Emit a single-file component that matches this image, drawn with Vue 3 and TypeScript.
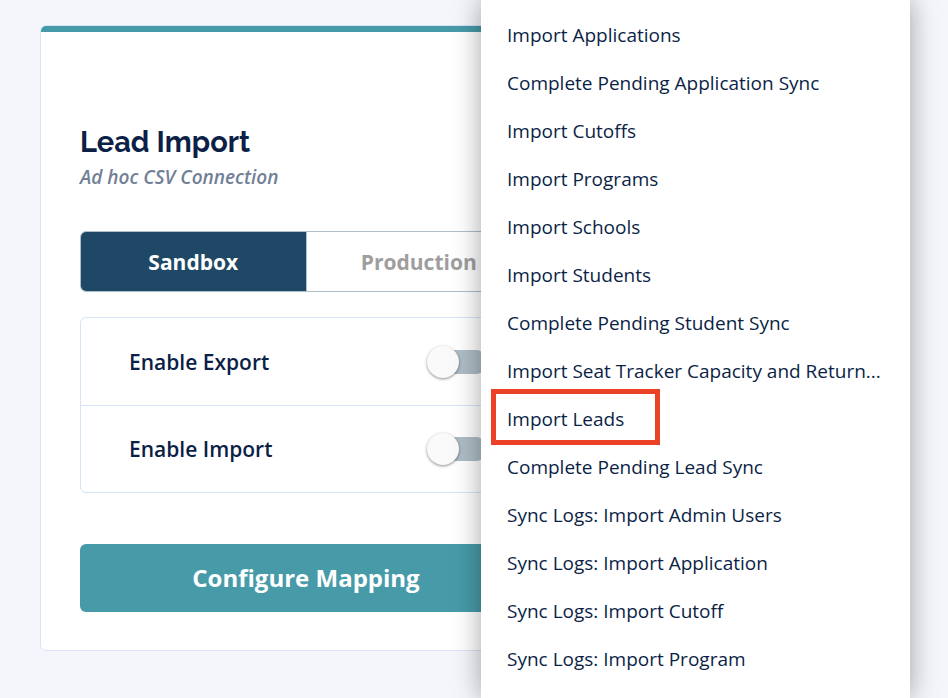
<script setup lang="ts">
import { ref } from 'vue'

type Environment = 'Sandbox' | 'Production'

const environments: Environment[] = ['Sandbox', 'Production']
const selected = ref<Environment>('Sandbox')

const switches = ref([
  { id: 'enable-export', label: 'Enable Export', on: false },
  { id: 'enable-import', label: 'Enable Import', on: false },
])

const actions: string[] = [
  'Import Applications',
  'Complete Pending Application Sync',
  'Import Cutoffs',
  'Import Programs',
  'Import Schools',
  'Import Students',
  'Complete Pending Student Sync',
  'Import Seat Tracker Capacity and Return...',
  'Import Leads',
  'Complete Pending Lead Sync',
  'Sync Logs: Import Admin Users',
  'Sync Logs: Import Application',
  'Sync Logs: Import Cutoff',
  'Sync Logs: Import Program',
]
const highlighted = 'Import Leads'
</script>

<template>
  <div class="page">
    <main class="card">
      <div class="accent"></div>
      <div class="content">
        <h1 class="title">Lead Import</h1>
        <p class="subtitle">Ad hoc CSV Connection</p>

        <div class="tabs">
          <button
            v-for="env in environments"
            :key="env"
            type="button"
            class="tab"
            :class="{ active: env === selected }"
            :aria-pressed="env === selected"
            @click="selected = env"
          >
            {{ env }}
          </button>
        </div>

        <div class="options">
          <div v-for="item in switches" :key="item.id" class="option">
            <label :for="item.id">{{ item.label }}</label>
            <input :id="item.id" v-model="item.on" class="switch" type="checkbox" />
          </div>
        </div>

        <button type="button" class="configure">Configure Mapping</button>
      </div>
    </main>

    <nav class="menu">
      <ul class="list">
        <li v-for="action in actions" :key="action">
          <button type="button" class="action" :class="{ highlighted: action === highlighted }">
            {{ action }}
          </button>
        </li>
      </ul>
    </nav>
  </div>
</template>

<style>
body {
  margin: 0;
  background: #f4f6fb;
}
</style>

<style scoped>
.page,
.page * {
  box-sizing: border-box;
}

.page {
  position: relative;
  min-height: 100vh;
  padding: 25px 40px 0;
  overflow: hidden;
  color: #0c1f46;
  background: #f4f6fb;
  font-family: "Open Sans", "Noto Sans", sans-serif;
  font-size: 21px;
}

button {
  margin: 0;
  border: 0;
  font: inherit;
  color: inherit;
  cursor: pointer;
}

.card {
  max-width: 532px;
  border: 1px solid #d8e4f6;
  border-radius: 6px;
  background: #fff;
  overflow: hidden;
}

.accent {
  height: 6px;
  background: #479ba9;
}

.content {
  padding: 92px 39px 38px;
}

.title {
  margin: 0;
  font-family: Raleway, Inter, sans-serif;
  font-size: 29px;
  line-height: 36px;
  font-weight: 700;
}

.subtitle {
  margin: 4px 0 40px;
  color: #718096;
  font-size: 19px;
  line-height: 27px;
  font-style: italic;
  font-weight: 600;
}

.tabs {
  display: flex;
  height: 61px;
  border: 1px solid #aebfc9;
  border-radius: 6px;
  overflow: hidden;
}

.tab {
  flex: 1;
  padding: 0;
  background: #fff;
  color: #9e9e9e;
  font-weight: 700;
}

.tab:first-child {
  border-right: 1px solid #aebfc9;
}

.tab.active {
  background: #1e4865;
  color: #fff;
}

.options {
  margin: 25px 0 51px;
  border: 1px solid #d8e4f6;
  border-radius: 6px;
}

.option {
  display: flex;
  align-items: center;
  justify-content: space-between;
  height: 87px;
  padding: 0 48px;
  font-weight: 600;
}

.option + .option {
  border-top: 1px solid #d8e4f6;
}

.switch {
  appearance: none;
  position: relative;
  width: 56px;
  height: 32px;
  margin: 0;
  cursor: pointer;
}

.switch::before {
  content: "";
  position: absolute;
  inset: 4px 0 4px 4px;
  border-radius: 6px;
  background: #aebdc6;
}

.switch::after {
  content: "";
  position: absolute;
  top: 0;
  left: 0;
  width: 32px;
  height: 32px;
  border-radius: 50%;
  background: #fafafa;
  box-shadow: 0 1px 3px rgba(0, 0, 0, 0.45);
}

.switch:checked::after {
  left: 24px;
}

.configure {
  display: block;
  width: 100%;
  height: 68px;
  padding: 0 0 2px;
  border-radius: 6px;
  background: #479ba9;
  color: #fff;
  font-size: 24px;
  font-weight: 700;
}

.menu {
  position: absolute;
  top: 0;
  bottom: 0;
  right: 38px;
  width: 429px;
  padding-top: 11px;
  background: #fff;
  box-shadow: 0 0 26px rgba(0, 0, 0, 0.36);
}

.list {
  margin: 0;
  padding: 0;
  list-style: none;
}

.action {
  display: block;
  width: 100%;
  height: 48px;
  padding: 0 26px;
  background: none;
  font-size: 19px;
  text-align: left;
  white-space: nowrap;
}

.action.highlighted {
  width: auto;
  min-width: 169px;
  height: 56px;
  margin: -6px 10px -2px;
  padding: 4px 30px 0 11px;
  border: 5px solid #eb4127;
}
</style>
